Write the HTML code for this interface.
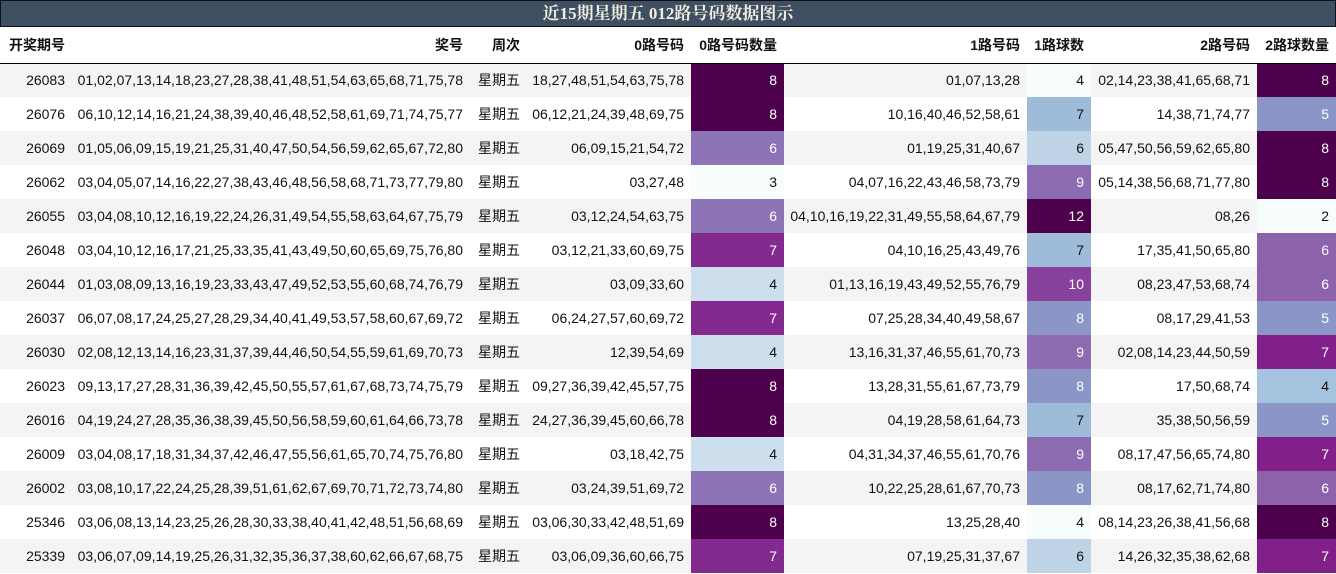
<!DOCTYPE html>
<html><head><meta charset="utf-8"><style>
*{margin:0;padding:0;box-sizing:border-box}
body{width:1336px;height:574px;overflow:hidden;background:#fff;font-family:"Liberation Sans","Noto Sans CJK SC",sans-serif;font-size:14px;color:#111}
.t{height:27px;background:#3f4f63;border:1px solid #111;color:#f2eedc;font-family:"Liberation Serif","Noto Serif CJK SC",serif;font-weight:bold;font-size:17px;text-align:center;line-height:25px}
table{border-collapse:collapse;table-layout:fixed;width:1336px}
td,th{text-align:right;padding:0 7px 0 0;white-space:nowrap;overflow:hidden}
th{height:36px;font-weight:bold;border-bottom:1px solid #000}
td{height:34px}
tbody tr:nth-child(odd){background:#f4f4f4}
.w{color:#fff}
</style></head><body>
<div class="t">近15期星期五 012路号码数据图示</div>
<table>
<colgroup><col style="width:72px"><col style="width:398px"><col style="width:57px"><col style="width:164px"><col style="width:93px"><col style="width:243px"><col style="width:64px"><col style="width:166px"><col style="width:79px"></colgroup>
<thead><tr><th>开奖期号</th><th>奖号</th><th>周次</th><th>0路号码</th><th>0路号码数量</th><th>1路号码</th><th>1路球数</th><th>2路号码</th><th>2路球数量</th></tr></thead>
<tbody>
<tr><td>26083</td><td>01,02,07,13,14,18,23,27,28,38,41,48,51,54,63,65,68,71,75,78</td><td>星期五</td><td>18,27,48,51,54,63,75,78</td><td class="w" style="background:#4d004b">8</td><td>01,07,13,28</td><td style="background:#f7fcfd">4</td><td>02,14,23,38,41,65,68,71</td><td class="w" style="background:#4d004b">8</td></tr>
<tr><td>26076</td><td>06,10,12,14,16,21,24,38,39,40,46,48,52,58,61,69,71,74,75,77</td><td>星期五</td><td>06,12,21,24,39,48,69,75</td><td class="w" style="background:#4d004b">8</td><td>10,16,40,46,52,58,61</td><td style="background:#9ebcda">7</td><td>14,38,71,74,77</td><td class="w" style="background:#8c96c6">5</td></tr>
<tr><td>26069</td><td>01,05,06,09,15,19,21,25,31,40,47,50,54,56,59,62,65,67,72,80</td><td>星期五</td><td>06,09,15,21,54,72</td><td class="w" style="background:#8c74b6">6</td><td>01,19,25,31,40,67</td><td style="background:#bfd3e6">6</td><td>05,47,50,56,59,62,65,80</td><td class="w" style="background:#4d004b">8</td></tr>
<tr><td>26062</td><td>03,04,05,07,14,16,22,27,38,43,46,48,56,58,68,71,73,77,79,80</td><td>星期五</td><td>03,27,48</td><td style="background:#f7fcfd">3</td><td>04,07,16,22,43,46,58,73,79</td><td class="w" style="background:#8c6bb1">9</td><td>05,14,38,56,68,71,77,80</td><td class="w" style="background:#4d004b">8</td></tr>
<tr><td>26055</td><td>03,04,08,10,12,16,19,22,24,26,31,49,54,55,58,63,64,67,75,79</td><td>星期五</td><td>03,12,24,54,63,75</td><td class="w" style="background:#8c74b6">6</td><td>04,10,16,19,22,31,49,55,58,64,67,79</td><td class="w" style="background:#4d004b">12</td><td>08,26</td><td style="background:#f7fcfd">2</td></tr>
<tr><td>26048</td><td>03,04,10,12,16,17,21,25,33,35,41,43,49,50,60,65,69,75,76,80</td><td>星期五</td><td>03,12,21,33,60,69,75</td><td class="w" style="background:#842a8f">7</td><td>04,10,16,25,43,49,76</td><td style="background:#9ebcda">7</td><td>17,35,41,50,65,80</td><td class="w" style="background:#8c62aa">6</td></tr>
<tr><td>26044</td><td>01,03,08,09,13,16,19,23,33,43,47,49,52,53,55,60,68,74,76,79</td><td>星期五</td><td>03,09,33,60</td><td style="background:#cddeed">4</td><td>01,13,16,19,43,49,52,55,76,79</td><td class="w" style="background:#88419d">10</td><td>08,23,47,53,68,74</td><td class="w" style="background:#8c62aa">6</td></tr>
<tr><td>26037</td><td>06,07,08,17,24,25,27,28,29,34,40,41,49,53,57,58,60,67,69,72</td><td>星期五</td><td>06,24,27,57,60,69,72</td><td class="w" style="background:#842a8f">7</td><td>07,25,28,34,40,49,58,67</td><td class="w" style="background:#8c96c6">8</td><td>08,17,29,41,53</td><td class="w" style="background:#8c96c6">5</td></tr>
<tr><td>26030</td><td>02,08,12,13,14,16,23,31,37,39,44,46,50,54,55,59,61,69,70,73</td><td>星期五</td><td>12,39,54,69</td><td style="background:#cddeed">4</td><td>13,16,31,37,46,55,61,70,73</td><td class="w" style="background:#8c6bb1">9</td><td>02,08,14,23,44,50,59</td><td class="w" style="background:#81208b">7</td></tr>
<tr><td>26023</td><td>09,13,17,27,28,31,36,39,42,45,50,55,57,61,67,68,73,74,75,79</td><td>星期五</td><td>09,27,36,39,42,45,57,75</td><td class="w" style="background:#4d004b">8</td><td>13,28,31,55,61,67,73,79</td><td class="w" style="background:#8c96c6">8</td><td>17,50,68,74</td><td style="background:#a5c2de">4</td></tr>
<tr><td>26016</td><td>04,19,24,27,28,35,36,38,39,45,50,56,58,59,60,61,64,66,73,78</td><td>星期五</td><td>24,27,36,39,45,60,66,78</td><td class="w" style="background:#4d004b">8</td><td>04,19,28,58,61,64,73</td><td style="background:#9ebcda">7</td><td>35,38,50,56,59</td><td class="w" style="background:#8c96c6">5</td></tr>
<tr><td>26009</td><td>03,04,08,17,18,31,34,37,42,46,47,55,56,61,65,70,74,75,76,80</td><td>星期五</td><td>03,18,42,75</td><td style="background:#cddeed">4</td><td>04,31,34,37,46,55,61,70,76</td><td class="w" style="background:#8c6bb1">9</td><td>08,17,47,56,65,74,80</td><td class="w" style="background:#81208b">7</td></tr>
<tr><td>26002</td><td>03,08,10,17,22,24,25,28,39,51,61,62,67,69,70,71,72,73,74,80</td><td>星期五</td><td>03,24,39,51,69,72</td><td class="w" style="background:#8c74b6">6</td><td>10,22,25,28,61,67,70,73</td><td class="w" style="background:#8c96c6">8</td><td>08,17,62,71,74,80</td><td class="w" style="background:#8c62aa">6</td></tr>
<tr><td>25346</td><td>03,06,08,13,14,23,25,26,28,30,33,38,40,41,42,48,51,56,68,69</td><td>星期五</td><td>03,06,30,33,42,48,51,69</td><td class="w" style="background:#4d004b">8</td><td>13,25,28,40</td><td style="background:#f7fcfd">4</td><td>08,14,23,26,38,41,56,68</td><td class="w" style="background:#4d004b">8</td></tr>
<tr><td>25339</td><td>03,06,07,09,14,19,25,26,31,32,35,36,37,38,60,62,66,67,68,75</td><td>星期五</td><td>03,06,09,36,60,66,75</td><td class="w" style="background:#842a8f">7</td><td>07,19,25,31,37,67</td><td style="background:#bfd3e6">6</td><td>14,26,32,35,38,62,68</td><td class="w" style="background:#81208b">7</td></tr>
</tbody></table>
</body></html>
